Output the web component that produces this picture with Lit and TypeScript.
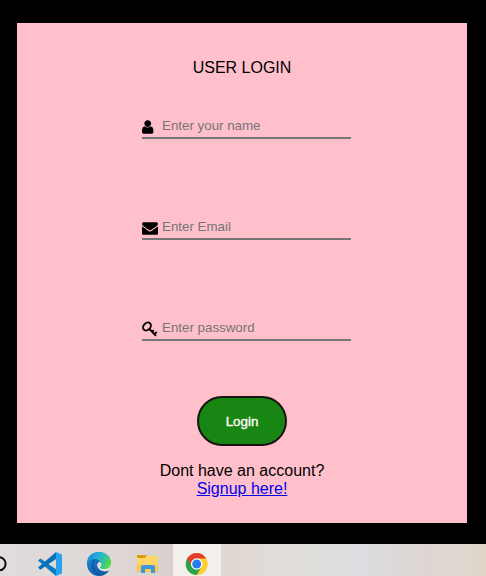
import { LitElement, html, svg, css } from "lit";
import { customElement, property } from "lit/decorators.js";

const icons = {
  user: svg`<path d="M1536 1399q0 109-62.500 187t-150.500 78h-854q-88 0-150.500-78t-62.500-187q0-85 8.500-160.500t31.500-152 58.500-131 94-89 134.500-34.500q131 128 313 128t313-128q76 0 134.500 34.500t94 89 58.500 131 31.500 152 8.500 160.500zm-256-887q0 159-112.500 271.500t-271.500 112.500-271.500-112.500-112.500-271.500 112.500-271.500 271.500-112.500 271.500 112.500 112.500 271.500z" transform="translate(-256 0)"/>`,
  mail: svg`<path d="M1792 710v794q0 66-47 113t-113 47h-1472q-66 0-113-47t-47-113v-794q44 49 101 87 362 246 497 345 57 42 92.500 65.500t94.500 48 110 24.500h2q51 0 110-24.500t94.500-48 92.500-65.500q170-123 498-345 57-39 100-87zm0-294q0 79-49 151t-122 123q-376 261-468 325-10 7-42.500 31t-54 38.500-52 32.500-57.500 27-50 9h-2q-23 0-50-9t-57.500-27-52-32.500-54-38.500-42.500-31q-91-64-262-182.500t-205-142.500q-62-42-117-115.500t-55-136.500q0-78 41.500-130t118.500-52h1472q65 0 112.500 47t47.500 113z"/>`,
  key: svg`<g transform="scale(112)" fill="none" stroke="#000" stroke-width="1.900">
    <ellipse cx="5" cy="5.500" rx="4.400" ry="3.400" transform="rotate(-45 5 5.500)"/>
    <path d="M7 7.500L14 14.800M10 10.800l1.700-1.700M12.500 13.200l2.300-2.300" /></g>`,
};

@customElement("login-field")
class LoginField extends LitElement {
  @property() icon: keyof typeof icons = "user";
  @property() type = "text";
  @property() label = "";

  static styles = css`
    :host { display: flex; width: 209px; height: 21px; border-bottom: 2px solid #767676; }
    .icon { width: 16px; height: 16px; flex: none; margin-top: 3px; overflow: visible; }
    .input {
      flex: 1; min-width: 0; margin: 1px 0 0 2px; padding: 0 2px; height: 17px;
      border: 0; background: none; outline: none;
      font: 13.3333px "Liberation Sans", Arial, sans-serif;
    }
    .input::placeholder { color: #757575; }
  `;

  render() {
    return html`
      <svg class="icon" viewBox="0 0 1792 1792">${icons[this.icon]}</svg>
      <input class="input" type=${this.type} placeholder=${this.label} />
    `;
  }
}

@customElement("task-bar")
class TaskBar extends LitElement {
  static styles = css`
    :host {
      display: flex; height: 32px; overflow: hidden;
      background: linear-gradient(90deg, #e2dbdc 0, #ded7d6 120px, #d8d0cc 172px, #e0d8d0 222px, #e0dedb 300px, #dcdde0 360px, #ded6d4 425px, #e0d7ca 486px);
    }
    .search { width: 25px; }
    .item { width: 49px; flex: none; }
    .files { width: 50px; }
    .active { width: 48px; background: #f2efed; }
    .glyph { display: block; height: 32px; width: 100%; }
  `;

  render() {
    return html`
      <div class="search"><svg class="glyph" viewBox="0 0 25 32"><circle cx="-1" cy="19.800" r="6.600" fill="none" stroke="#050505" stroke-width="1.900"/></svg></div>
      <div class="item"><svg class="glyph" viewBox="0 0 49 32">
        <path d="M13 16.600l2.400-2.200L31 25.200V32z" fill="#0a7cc2"/>
        <path d="M13 23.600l2.400 2.200L31 15V8z" fill="#0870b4"/>
        <path d="M31 8l6 2.500v19L31 32z" fill="#25a3ee"/>
      </svg></div>
      <div class="item"><svg class="glyph" viewBox="0 0 49 32">
        <defs>
          <linearGradient id="sweep" x1="0" y1="0.300" x2="1" y2="0.600"><stop stop-color="#1687d3"/><stop offset=".45" stop-color="#27b3d9"/><stop offset=".75" stop-color="#35c98c"/><stop offset="1" stop-color="#5de03c"/></linearGradient>
          <linearGradient id="deep" x1="0" y1="0" x2="1" y2="1"><stop stop-color="#168ddd"/><stop offset="1" stop-color="#104b94"/></linearGradient>
        </defs>
        <circle cx="25" cy="20" r="12" fill="url(#deep)"/>
        <path d="M25.500 18c-3 1-2.800 5.500.2 7.800 3 2.300 7.500 2 10 .5L38 20z" fill="#e4dfdf"/>
        <path d="M13 20C13 12 18 8 25 8c7 0 12 5 12 11 0 4-3 6-7 6-3 0-5-1-4-2.500 2.800-3.500-.5-7.500-5-7.500-4 0-7 2-8 5z" fill="url(#sweep)"/>
        <path d="M20.500 16c-4 5-1.500 12 5.500 15.300" fill="none" stroke="#1257a7" stroke-width="1.500"/>
        <ellipse cx="25.400" cy="20.800" rx="2" ry="2.600" fill="#e4dfdf"/>
      </svg></div>
      <div class="item files"><svg class="glyph" viewBox="0 0 50 32">
        <path d="M14 11h10l-2 3h-8z" fill="#df9a0b"/>
        <path d="M14 14h8l2-2h11v16H14z" fill="#ffd566"/>
        <path d="M14 21h21v7H14z" fill="#fbc94d"/>
        <path d="M18 29v-6q0-2 2-2h10q2 0 2 2v6h-4v-4h-6v4z" fill="#3d98dc"/>
      </svg></div>
      <div class="item active"><svg class="glyph" viewBox="0 0 48 32">
        <circle cx="23.700" cy="20" r="11" fill="#ffcd2e"/>
        <path d="M23.700 20L14.200 14.500A11 11 0 0 0 23.700 31l5-8.500z" fill="#27a34a"/>
        <path d="M14.200 14.500A11 11 0 0 1 33.200 14.500H23.700v6l-4.800 2z" fill="#e33b2e"/>
        <circle cx="23.700" cy="20" r="5.800" fill="#fff"/><circle cx="23.700" cy="20" r="4.500" fill="#267cec"/>
      </svg></div>
    `;
  }
}

@customElement("app-root")
class AppRoot extends LitElement {
  static styles = css`
    :host {
      display: flex; flex-direction: column; width: 486px; height: 576px; overflow: hidden;
      background: #000; color: #000; font: 16px/18px "Liberation Sans", Arial, sans-serif;
    }
    .card {
      box-sizing: border-box; width: 450px; height: 500px; margin: 23px 0 21px 17px;
      padding-top: 36px; background: #ffc0cb;
      display: flex; flex-direction: column; align-items: center;
    }
    .title { margin-bottom: 39px; }
    .fields { display: grid; gap: 78px; margin-left: 9px; }
    .login {
      box-sizing: border-box; width: 90px; height: 50px; margin: 55px 0 16px; padding: 0;
      border: 2px solid #000; border-radius: 25px; background: green; color: #fff; opacity: .9;
      font: 13.3333px "Liberation Sans", Arial, sans-serif; -webkit-text-stroke: 0.4px #fff;
    }
    .signup { text-align: center; }
    .link { color: #00e; text-decoration: underline; }
  `;

  render() {
    return html`
      <main class="card">
        <div class="title">USER LOGIN</div>
        <div class="fields">
          <login-field icon="user" label="Enter your name"></login-field>
          <login-field icon="mail" label="Enter Email"></login-field>
          <login-field icon="key" type="password" label="Enter password"></login-field>
        </div>
        <button class="login">Login</button>
        <div class="signup">Dont have an account?<br /><a class="link" href="#">Signup here!</a></div>
      </main>
      <task-bar></task-bar>
    `;
  }
}
